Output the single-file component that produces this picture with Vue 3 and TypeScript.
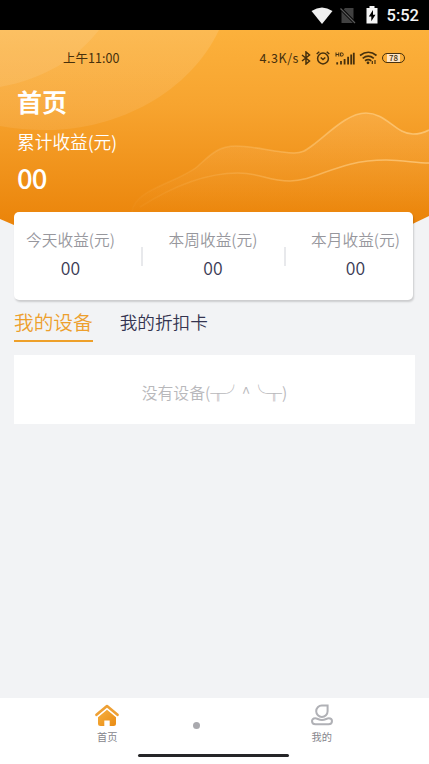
<script setup lang="ts">
import { ref } from 'vue'

interface Stat { label: string; value: string }

const stats: Stat[] = [
  { label: '今天收益(元)', value: '00' },
  { label: '本周收益(元)', value: '00' },
  { label: '本月收益(元)', value: '00' },
]
const tabs: string[] = ['我的设备', '我的折扣卡']
const activeTab = ref(0)
</script>

<template>
  <div class="screen">
    <div class="system-bar">
      <svg class="sys-wifi" viewBox="0 0 22 17"><path d="M11 17 0.5 4Q11-3 21.5 4Z" fill="#f0f0f0" /></svg>
      <svg class="sys-sim" viewBox="0 0 16 17">
        <path d="M5 1H13.5V16H1.5V4.5Z" fill="#414141" />
        <path d="M0 .8 15.5 16.5" stroke="#000" stroke-width="3" />
        <path d="M.5 1.5 15 16" stroke="#5a5a5a" stroke-width="1.3" />
      </svg>
      <svg class="sys-battery" viewBox="0 0 12 18">
        <path d="M3.5 0H8.5V2H11.5V17.5H.5V2H3.5Z" fill="#f5f5f5" />
        <path d="M7 4 2.8 10.4H5.3V15.2L9.5 8.7H7Z" fill="#000" />
      </svg>
      <span class="sys-time">5:52</span>
    </div>

    <header class="hero">
      <svg class="hero-art" viewBox="0 0 429 202" preserveAspectRatio="none">
        <defs>
          <linearGradient id="sky" x1="0" y1="0" x2="0" y2="1">
            <stop offset="0" stop-color="#fcb13c" />
            <stop offset=".35" stop-color="#f7a42f" />
            <stop offset=".88" stop-color="#eb850b" />
            <stop offset="1" stop-color="#ec870d" />
          </linearGradient>
          <linearGradient id="orb" x1="0" y1="0" x2="0" y2="1">
            <stop offset="0" stop-color="#fff" stop-opacity=".12" />
            <stop offset="1" stop-color="#fff" stop-opacity=".08" />
          </linearGradient>
          <linearGradient id="line" gradientUnits="userSpaceOnUse" x1="132" y1="0" x2="429" y2="0">
            <stop offset="0" stop-color="#ffd38e" stop-opacity=".03" />
            <stop offset=".4" stop-color="#ffd38e" stop-opacity=".26" />
            <stop offset=".7" stop-color="#ffd38e" stop-opacity=".55" />
            <stop offset="1" stop-color="#ffd38e" stop-opacity=".68" />
          </linearGradient>
          <linearGradient id="wave" gradientUnits="userSpaceOnUse" x1="0" y1="83" x2="0" y2="180">
            <stop offset="0" stop-color="#ffc889" stop-opacity=".22" />
            <stop offset="1" stop-color="#ffc889" stop-opacity="0" />
          </linearGradient>
        </defs>
        <path d="M0 0H429V186L400 200Q214 235 14 195L0 189Z" fill="url(#sky)" />
        <path d="M0 0H219C190 62 118 100 47 100Q21 100 0 96Z" fill="url(#orb)" />
        <path d="M0 0H99C76 29 44 49 0 57Z" fill="#fff" fill-opacity=".09" />
        <path d="M132 182C134 159 178 153 198 136C210 125 218 116 236 116C255 116 276 123 294 123C302 123 305 121 313 115C330 102 348 83 366 83C386 83 396 104 413 104Q421 104 429 100V182Z" fill="url(#wave)" />
        <path d="M132 182C134 159 178 153 198 136C210 125 218 116 236 116C255 116 276 123 294 123C302 123 305 121 313 115C330 102 348 83 366 83C386 83 396 104 413 104Q421 104 429 100" fill="none" stroke="url(#line)" stroke-width="1.6" />
        <path d="M140 177C170 158 205 143 238 143C261 143 267 151 290 151C317 151 337 130 386 130C404 130 415 133 429 133" fill="none" stroke="url(#line)" stroke-width="1.5" />
      </svg>

      <div class="phone-bar">
        <span class="phone-time">上午11:00</span>
        <div class="phone-icons">
          <span class="speed">4.3K/s</span>
          <svg class="bluetooth" viewBox="0 0 10 14"><path d="M1 4 8.5 10 5 13V1L8.5 4 1 10" /></svg>
          <svg class="alarm" viewBox="0 0 14 14">
            <circle cx="7" cy="7.5" r="5.4" /><path d="M.7 3 3.3.8M13.3 3 10.7.8M4.7 6.5 7 8.5 9.3 6.5" />
          </svg>
          <svg class="signal" viewBox="0 0 20 13">
            <path class="hd" d="M1 .5V4.5M3.8 .5V4.5M1 2.5H3.8M5.6 .9V4.1H6.6Q8.3 4.1 8.3 2.5T6.6 .9H5.6" />
            <path class="bars" d="M2.2 10.2V12.5M6 9V12.5M9.6 7V12.5M13.1 4.7V12.5M16.2 2.5V12.5M18.8 .8V12.5" />
          </svg>
          <svg class="wifi" viewBox="0 0 19 14">
            <path d="M1 4.5Q9.5-2 17.5 4.5M3.7 7.3Q9.3 2.8 14.8 7.3M6 9.8Q9.2 7.4 12.3 9.8" />
            <circle cx="9" cy="11.8" r="1.4" /><path class="arrows" d="M13.3 10V13M16 9V13" />
          </svg>
          <span class="charge">78</span>
        </div>
      </div>

      <div class="intro">
        <h1>首页</h1>
        <p class="total-label">累计收益(元)</p>
        <p class="total">00</p>
      </div>
    </header>

    <section class="stats">
      <div v-for="s in stats" :key="s.label" class="stat">
        <span class="stat-label">{{ s.label }}</span>
        <span class="stat-value">{{ s.value }}</span>
      </div>
    </section>

    <nav class="tabs">
      <button v-for="(t, i) in tabs" :key="t" :class="['tab', { active: activeTab === i }]" @click="activeTab = i">{{ t }}</button>
    </nav>

    <main class="empty">没有设备(╥╯^╰╥)</main>

    <footer class="bottom">
      <div class="bottom-nav">
        <a class="nav-item">
          <svg class="home" viewBox="0 0 24 23">
            <defs><linearGradient id="house" x1="0" y1="0" x2="1" y2="1"><stop offset="0" stop-color="#f6b03f" /><stop offset="1" stop-color="#e98b14" /></linearGradient></defs>
            <path d="M1.5 10.8 12 2 22.5 10.8" fill="none" stroke="#eea034" stroke-width="2.6" stroke-linecap="round" stroke-linejoin="round" />
            <path d="M12 5.8 21 13.3V19.5Q21 22 18.5 22H14.7V16.5H9.3V22H5.5Q3 22 3 19.5V13.3Z" fill="url(#house)" />
          </svg>
          <span>首页</span>
        </a>
        <i class="dot"></i>
        <a class="nav-item">
          <svg class="user" viewBox="0 0 22 22">
            <path d="M10.8 1.5H16.6V7.2A5.7 5.7 0 1 1 10.8 1.5Z" />
            <path d="M4.2 14.3C6.5 14.3 7.5 16 11 16S15.5 14.3 17.8 14.3C20 14.3 21 15.7 21 17.1C21 19 19.5 20.3 17.5 20.3H4.5C2.5 20.3 1 19 1 17.1C1 15.7 2 14.3 4.2 14.3Z" />
          </svg>
          <span>我的</span>
        </a>
      </div>
      <div class="home-bar"></div>
    </footer>
  </div>
</template>

<style>
body { margin: 0; background: #f2f3f5; }
</style>

<style scoped>
* { box-sizing: border-box; }
.screen { display: flex; flex-direction: column; height: 764px; background: #f2f3f5; font-family: "Noto Sans CJK SC", sans-serif; overflow: hidden; }
.system-bar { height: 30px; flex: none; background: #000; display: flex; align-items: center; justify-content: flex-end; padding-right: 10px; color: #f5f5f5; }
.sys-wifi { width: 22px; height: 17px; margin-right: 7px; }
.sys-sim { width: 16px; height: 17px; margin-right: 10px; }
.sys-battery { width: 12px; height: 18px; margin-right: 9px; }
.sys-time { font: 500 16.5px/30px Roboto, sans-serif; padding-top: 2px; }
.hero { position: relative; height: 182px; flex: none; display: flow-root; }
.hero-art { position: absolute; inset: 0 0 auto 0; width: 100%; height: 202px; }
.phone-bar { position: relative; display: flex; justify-content: space-between; align-items: center; height: 24px; margin-top: 16px; padding: 0 24px 0 63px; color: #46300d; font-size: 12.5px; line-height: 24px; }
.phone-time { letter-spacing: .05px; }
.phone-icons { display: flex; align-items: center; }
.phone-icons svg { fill: none; stroke: #46300d; }
.speed { letter-spacing: .55px; }
.phone-icons .bluetooth { width: 10px; height: 14px; margin: 0 5px 0 2px; stroke-width: 1.5; }
.phone-icons .alarm { width: 14px; height: 14px; margin-right: 5px; stroke-width: 1.5; }
.phone-icons .signal { width: 20px; height: 13px; margin-right: 4px; }
.hd { stroke-width: 1; }
.bars { stroke-width: 1.8; }
.phone-icons .wifi { width: 19px; height: 14px; margin-right: 4px; stroke-width: 1.7; }
.wifi circle { fill: #46300d; stroke: none; }
.wifi .arrows { stroke-width: 1.2; }
.charge { width: 23px; height: 10px; border: 1.5px solid #46300d; border-radius: 5px; background: linear-gradient(90deg, transparent 20%, #ffe5c5 20% 80%, transparent 80%); font: 500 8px/8px "Noto Sans CJK SC", sans-serif; text-align: center; }
.intro { position: relative; padding: 13px 17px 0; color: #fff; }
h1, p { margin: 0; }
h1 { font-size: 25px; line-height: 36px; font-weight: 700; }
.total-label { font-size: 17.7px; line-height: 26px; margin-top: 9px; font-weight: 350; }
.total { font-size: 27.5px; line-height: 36px; font-weight: 500; margin-top: 5px; letter-spacing: -.8px; }
.stats { position: relative; flex: none; height: 88px; margin: 0 16px 0 14px; display: grid; grid-template-columns: 113px 172px 113px; background: #fff; border-radius: 5px; box-shadow: 1px 2px 2px rgba(0, 0, 0, .16); }
.stat { display: flex; flex-direction: column; align-items: center; padding-top: 16px; position: relative; }
.stat:nth-child(2)::before, .stat:nth-child(2)::after { content: ""; position: absolute; top: 35px; width: 2px; height: 19px; background: #e8e9ec; }
.stat:nth-child(2)::before { left: 14px; }
.stat:nth-child(2)::after { right: 13px; }
.stat-label { color: #97979d; font-size: 15.7px; line-height: 24px; font-weight: 350; white-space: nowrap; }
.stat-value { color: #3c3c56; font-size: 17.6px; line-height: 26px; margin-top: 3px; font-weight: 350; }
.tabs { display: flex; flex: none; height: 42px; padding-left: 14px; gap: 27px; }
.tab { border: 0; padding: 3px 0 0; background: none; font-family: inherit; font-size: 17.6px; line-height: 37px; font-weight: 350; color: #343450; border-bottom: 2px solid transparent; }
.tab.active { font-size: 19.7px; color: #ed9f2d; border-color: #eea02a; }
.empty { flex: none; height: 69px; margin: 13px 14px 0; background: #fff; display: flex; align-items: center; justify-content: center; font-size: 15.8px; line-height: 24px; color: #b8b8bb; padding-top: 6px; font-weight: 350; }
.bottom { height: 66px; margin-top: auto; background: #fff; }
.bottom-nav { display: grid; grid-template-columns: 1fr 1fr; height: 56px; position: relative; }
.nav-item { display: flex; flex-direction: column; align-items: center; padding-top: 6px; font-size: 10.2px; line-height: 14px; color: #85858c; }
.home { width: 24px; height: 23px; margin-bottom: 3px; }
.user { width: 22px; height: 22px; margin-bottom: 4px; fill: none; stroke: #b0b1b6; stroke-width: 2; }
.dot { position: absolute; left: 193px; top: 24px; width: 7px; height: 7px; border-radius: 50%; background: #a9a9ae; }
.home-bar { width: 151px; height: 3px; margin: 0 0 0 138px; background: #252527; border-radius: 2px; }
</style>
